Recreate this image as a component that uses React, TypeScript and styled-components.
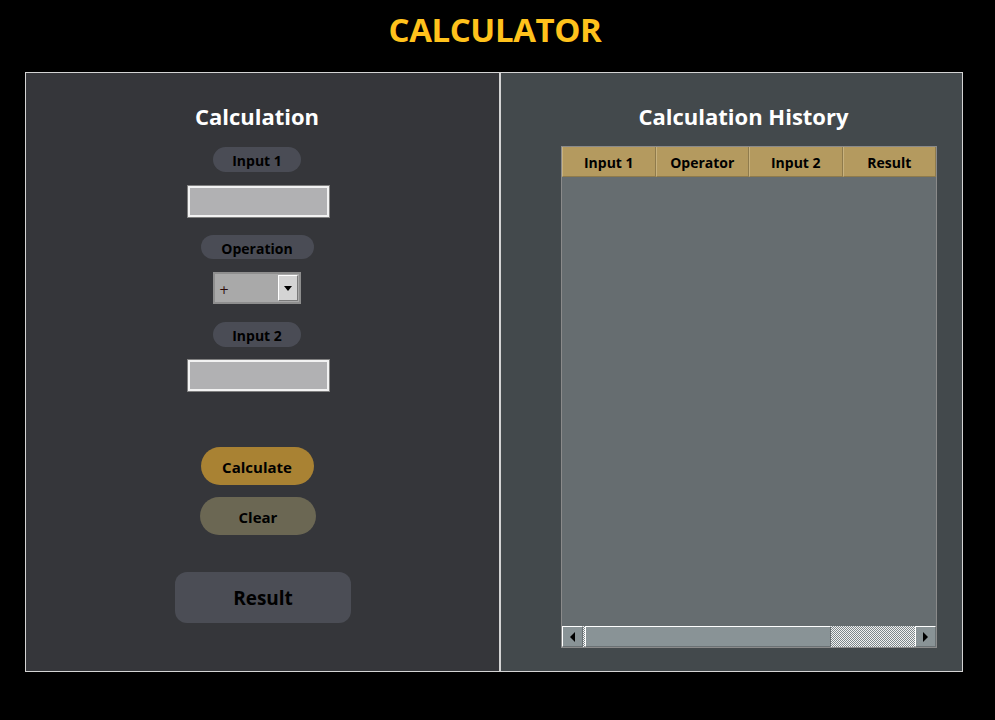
import React from "react";
import styled, { createGlobalStyle } from "styled-components";

const Global = createGlobalStyle`
  html, body { margin: 0; padding: 0; background: #000; }
  body { font-family: "Open Sans", "Noto Sans", sans-serif; }
  * { box-sizing: border-box; }
`;

const Page = styled.div`
  width: 995px;
  height: 720px;
  background: #000;
  display: flex;
  flex-direction: column;
  align-items: center;
`;

const Title = styled.h1`
  margin: 0 5px 0 0;
  height: 72px;
  padding-top: 8px;
  font-size: 33px;
  line-height: 44px;
  font-weight: 700;
  color: #ffc21c;
  letter-spacing: -0.4px;
`;

const Frame = styled.div`
  width: 938px;
  height: 600px;
  margin-right: 7px;
  border: 1px solid #d4d4d4;
  display: grid;
  grid-template-columns: 473px 2px 1fr;
`;

const Divider = styled.div`
  background: #d4d4d4;
`;

const LeftPanel = styled.div`
  background: #35363a;
  display: flex;
  flex-direction: column;
  align-items: center;
  padding: 28px 11px 0 0;
`;

const RightPanel = styled.div`
  background: #43494c;
  display: flex;
  flex-direction: column;
  padding: 28px 25px 23px 60px;
`;

const Heading = styled.h2<{ $shift?: number }>`
  margin: 0;
  font-size: 22px;
  line-height: 30px;
  font-weight: 700;
  color: #fff;
  text-align: center;
  align-self: center;
  margin-left: ${(p) => (p.$shift ?? 0) * 2}px;
`;

const Pill = styled.div<{ $w: number; $h: number; $mt: number }>`
  width: ${(p) => p.$w}px;
  height: ${(p) => p.$h}px;
  margin-top: ${(p) => p.$mt}px;
  border-radius: ${(p) => p.$h / 2}px;
  background: #4a4c55;
  color: #000;
  font-size: 14px;
  font-weight: 700;
  padding-top: 2px;
  display: flex;
  align-items: center;
  justify-content: center;
`;

const TextBox = styled.input<{ $mt: number }>`
  width: 141px;
  height: 31px;
  margin-top: ${(p) => p.$mt}px;
  margin-left: 3px;
  background: #b1b1b3;
  border: 2px solid #f2f2f2;
  box-shadow: 0 0 0 1px #808080;
  outline: none;
  padding: 0 4px;
  font-family: inherit;
`;

const Combo = styled.div`
  width: 88px;
  height: 32px;
  margin-top: 13px;
  border: 2px solid #8e8e8e;
  background: #a9a9a9;
  display: flex;
  align-items: center;
  justify-content: space-between;
  padding: 1px 1px 1px 4px;
`;

const ComboValue = styled.span`
  font-family: "DejaVu Sans", sans-serif;
  font-size: 12px;
  color: #2a0a0a;
  padding-top: 4px;
`;

const ComboButton = styled.div`
  width: 20px;
  height: 26px;
  background: #d4d4d4;
  border-top: 1px solid #fff;
  border-left: 1px solid #fff;
  border-right: 1px solid #7a7a7a;
  border-bottom: 1px solid #7a7a7a;
  display: flex;
  align-items: center;
  justify-content: center;
`;

const DownArrow = styled.div`
  width: 0;
  height: 0;
  border-left: 4px solid transparent;
  border-right: 4px solid transparent;
  border-top: 5px solid #000;
`;

const ActionButton = styled.button<{ $bg: string; $w: number; $mt: number; $dx?: number }>`
  width: ${(p) => p.$w}px;
  height: 38px;
  margin-top: ${(p) => p.$mt}px;
  margin-left: ${(p) => (p.$dx ?? 0) * 2}px;
  border-radius: 19px;
  border: none;
  background: ${(p) => p.$bg};
  color: #000;
  font-family: inherit;
  font-size: 15px;
  font-weight: 700;
  padding: 1px 0 0;
`;

const ResultBox = styled.div`
  width: 176px;
  height: 51px;
  margin-top: 37px;
  margin-left: 12px;
  border-radius: 12px;
  background: #4b4d55;
  color: #000;
  font-size: 19px;
  font-weight: 700;
  display: flex;
  align-items: center;
  justify-content: center;
`;

const Table = styled.div`
  margin-top: 15px;
  flex: 1;
  border: 1px solid #8a8a8a;
  background: #666d70;
  display: flex;
  flex-direction: column;
`;

const HeaderRow = styled.div`
  display: grid;
  grid-template-columns: repeat(4, 1fr);
  height: 30px;
`;

const HeaderCell = styled.div`
  background: #b49a5f;
  border-right: 1px solid #8f7b4c;
  border-bottom: 1px solid #8f7b4c;
  border-left: 1px solid #c8b27e;
  color: #000;
  font-size: 14px;
  font-weight: 700;
  padding-top: 2px;
  display: flex;
  align-items: center;
  justify-content: center;
`;

const TableBody = styled.div`
  flex: 1;
`;

const ScrollBar = styled.div`
  height: 21px;
  display: flex;
  background-image: repeating-conic-gradient(#f2f2f2 0 25%, #7d878a 0 50%);
  background-size: 2px 2px;
`;

const ScrollButton = styled.div`
  width: 21px;
  background: #899396;
  border-top: 1px solid #fff;
  border-left: 1px solid #fff;
  border-right: 1px solid #6a7174;
  border-bottom: 1px solid #6a7174;
  display: flex;
  align-items: center;
  justify-content: center;
`;

const ScrollTrack = styled.div`
  flex: 1;
  padding-left: 2px;
  display: flex;
`;

const Thumb = styled.div`
  width: 246px;
  background: #899396;
  border-top: 1px solid #fff;
  border-left: 1px solid #fff;
  border-right: 1px solid #6a7174;
  border-bottom: 1px solid #6a7174;
`;

const Arrow = styled.div<{ $dir: "left" | "right" }>`
  width: 0;
  height: 0;
  border-top: 5px solid transparent;
  border-bottom: 5px solid transparent;
  ${(p) =>
    p.$dir === "left"
      ? "border-right: 5px solid #000;"
      : "border-left: 5px solid #000;"}
`;

export default function App() {
  return (
    <Page>
      <Global />
      <Title>CALCULATOR</Title>
      <Frame>
        <LeftPanel>
          <Heading>Calculation</Heading>
          <Pill $w={88} $h={25} $mt={16}>Input 1</Pill>
          <TextBox $mt={14} />
          <Pill $w={113} $h={24} $mt={18}>Operation</Pill>
          <Combo>
            <ComboValue>+</ComboValue>
            <ComboButton>
              <DownArrow />
            </ComboButton>
          </Combo>
          <Pill $w={88} $h={25} $mt={18}>Input 2</Pill>
          <TextBox $mt={13} />
          <ActionButton $bg="#a98233" $w={113} $mt={56}>Calculate</ActionButton>
          <ActionButton $bg="#6b6753" $w={116} $mt={12} $dx={1}>Clear</ActionButton>
          <ResultBox>Result</ResultBox>
        </LeftPanel>
        <Divider />
        <RightPanel>
          <Heading $shift={-5.5}>Calculation History</Heading>
          <Table>
            <HeaderRow>
              <HeaderCell>Input 1</HeaderCell>
              <HeaderCell>Operator</HeaderCell>
              <HeaderCell>Input 2</HeaderCell>
              <HeaderCell>Result</HeaderCell>
            </HeaderRow>
            <TableBody />
            <ScrollBar>
              <ScrollButton>
                <Arrow $dir="left" />
              </ScrollButton>
              <ScrollTrack>
                <Thumb />
              </ScrollTrack>
              <ScrollButton>
                <Arrow $dir="right" />
              </ScrollButton>
            </ScrollBar>
          </Table>
        </RightPanel>
      </Frame>
    </Page>
  );
}
